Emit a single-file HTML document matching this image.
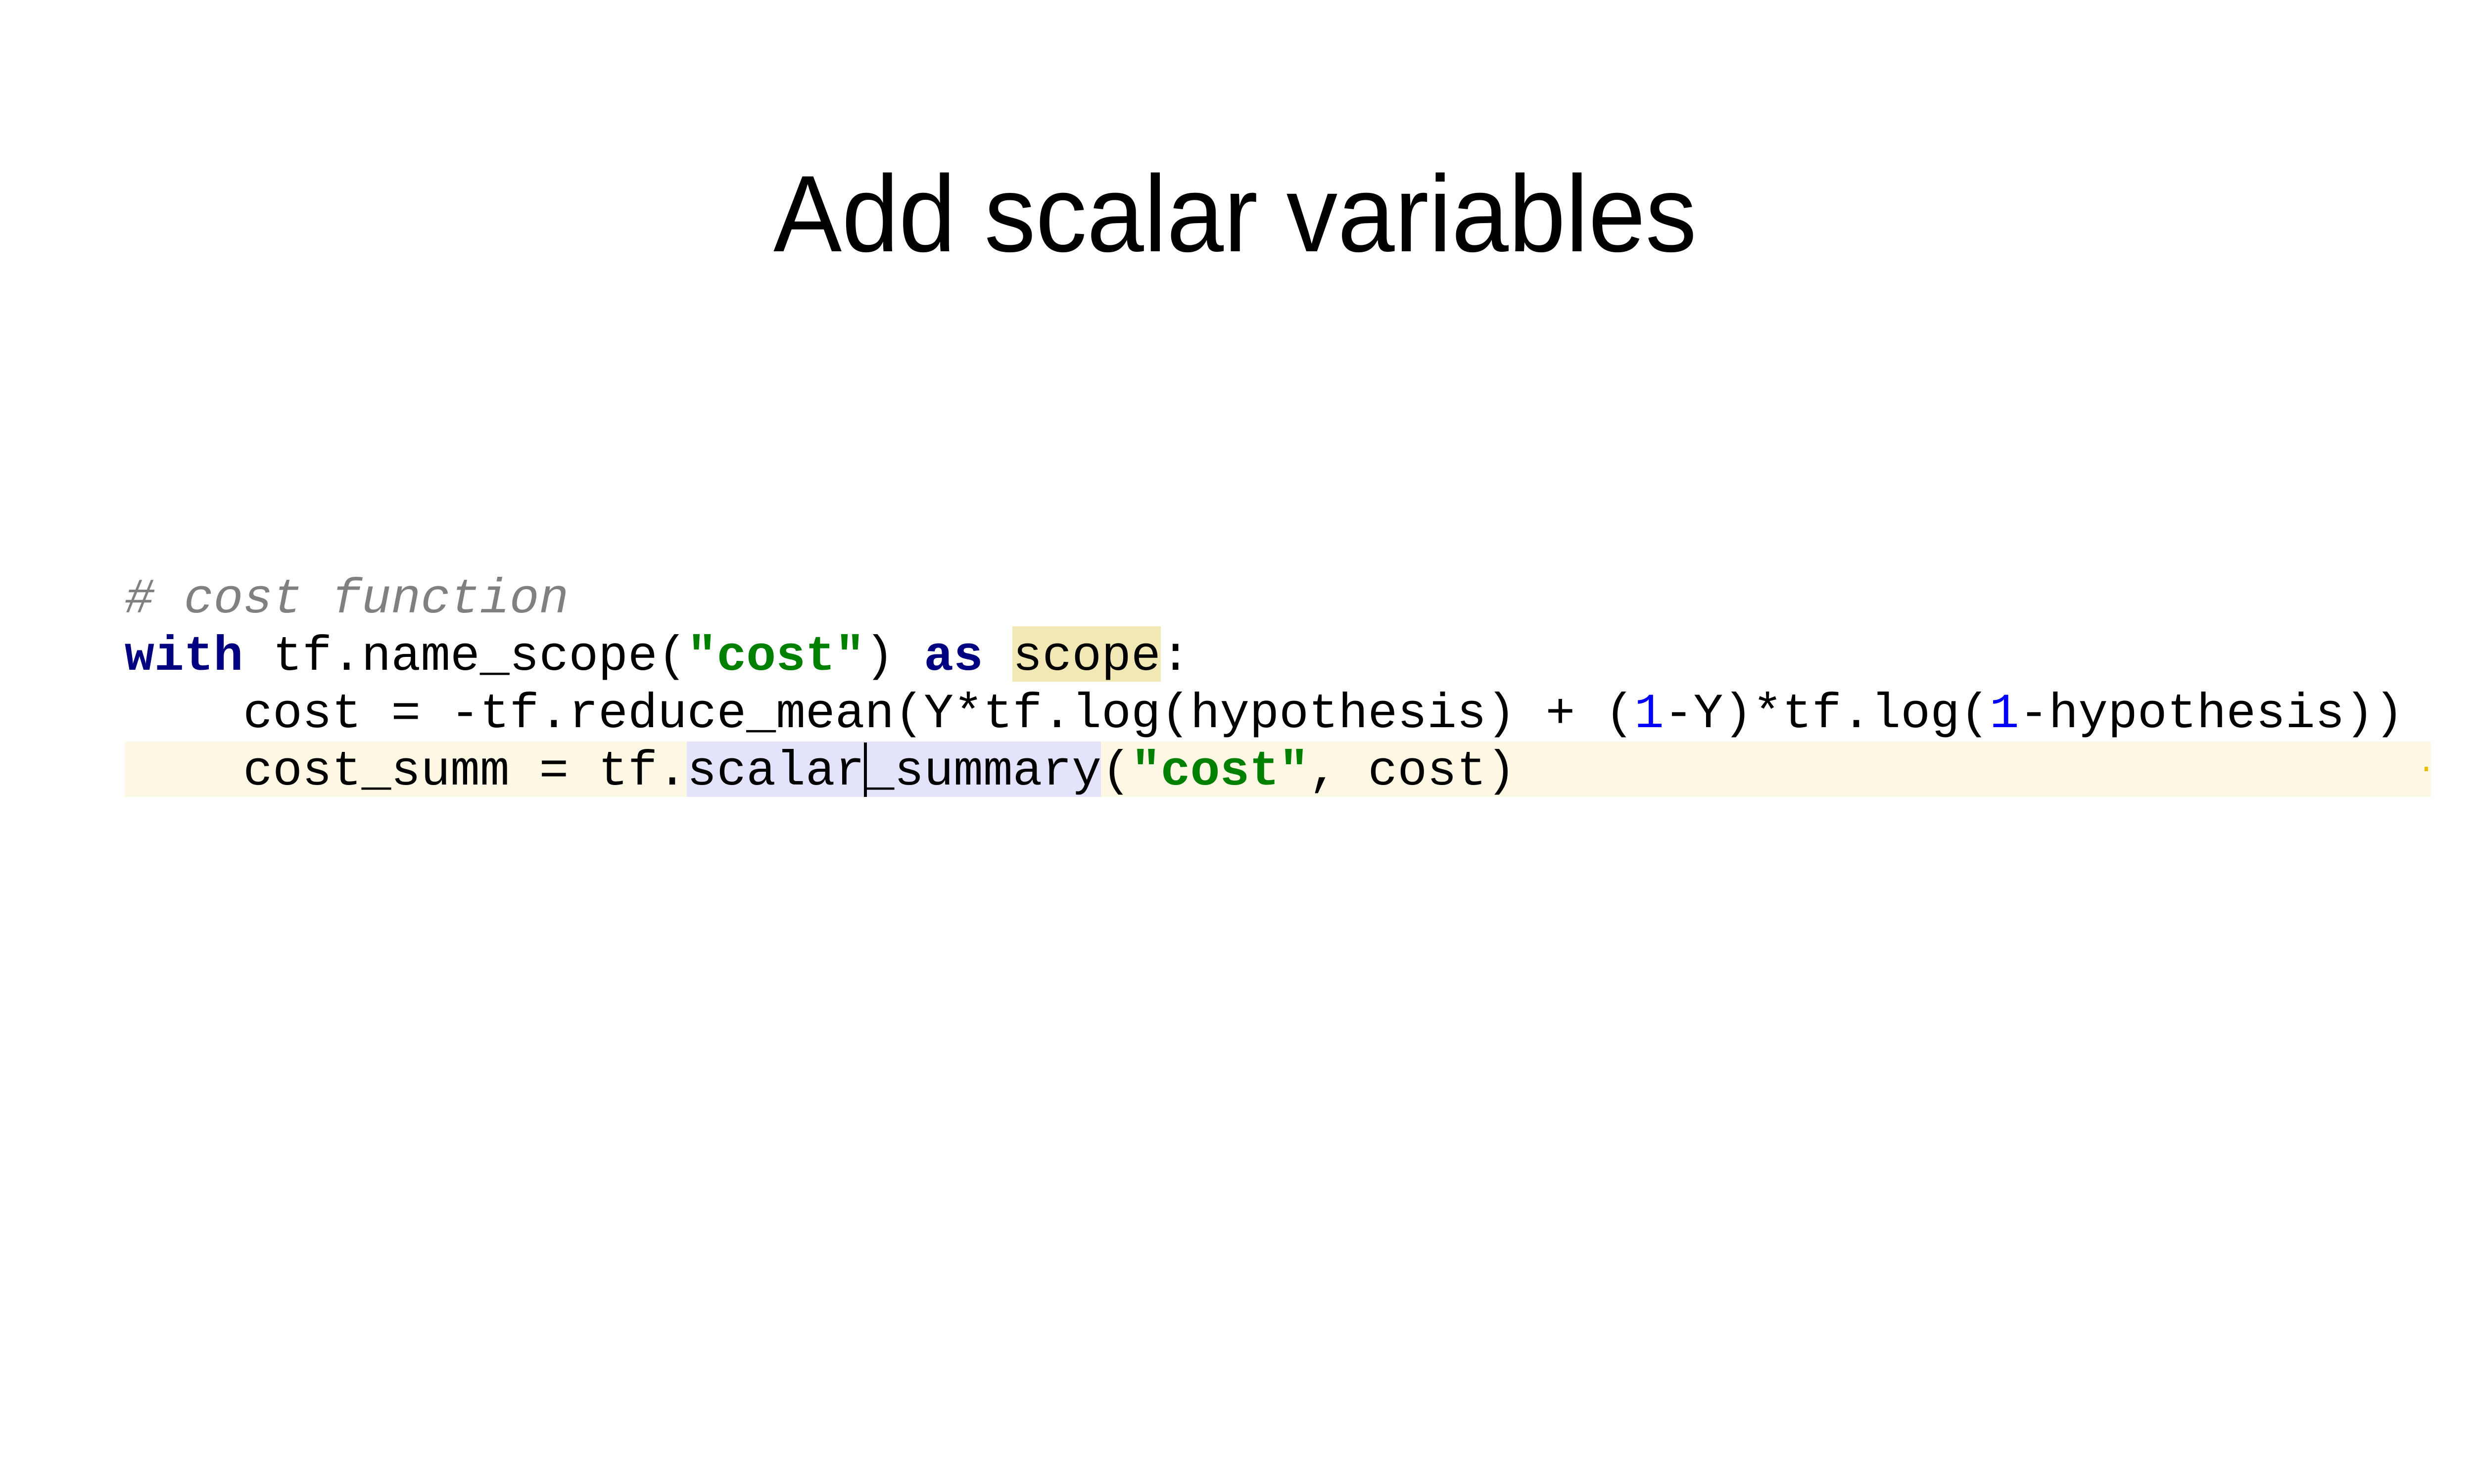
<!DOCTYPE html>
<html><head><meta charset="utf-8"><style>
html,body{margin:0;padding:0;background:#fff;}
body{width:5334px;height:3000px;position:relative;overflow:hidden;}
.t{position:absolute;left:1563px;top:322px;font-family:"Liberation Sans",sans-serif;font-size:220px;line-height:1;white-space:nowrap;transform-origin:0 0;transform:scaleX(0.942);color:#000;}
.box{position:absolute;}
.ln{position:absolute;left:252px;font-family:"Liberation Mono",monospace;font-size:99.7px;line-height:116px;height:116px;white-space:pre;color:#000;}
.c{color:#808080;font-style:italic;}
.k{color:#000080;font-weight:bold;}
.s{color:#008000;font-weight:bold;}
.n{color:#0000ff;}
</style></head><body>
<div class="t">Add scalar variables</div>
<div class="box" style="left:252px;top:1499px;width:4661px;height:112px;background:#fdf8e4;"></div>
<div class="box" style="left:1388px;top:1499px;width:837px;height:112px;background:#e3e3fb;"></div>
<div class="box" style="left:2046px;top:1266px;width:300px;height:112px;background:#f2e8b6;"></div>
<div class="box" style="left:1746px;top:1501px;width:6px;height:110px;background:#000;"></div>
<div class="box" style="left:4900px;top:1550px;width:7px;height:9px;background:#e6c000;"></div>
<div class="ln" style="top:1154px;"><span class="c"># cost function</span></div>
<div class="ln" style="top:1270px;"><span class="k">with</span> tf.name_scope(<span class="s">"cost"</span>) <span class="k">as</span> scope:</div>
<div class="ln" style="top:1386px;">    cost = -tf.reduce_mean(Y*tf.log(hypothesis) + (<span class="n">1</span>-Y)*tf.log(<span class="n">1</span>-hypothesis))</div>
<div class="ln" style="top:1502px;">    cost_summ = tf.scalar_summary(<span class="s">"cost"</span>, cost)</div>
</body></html>
